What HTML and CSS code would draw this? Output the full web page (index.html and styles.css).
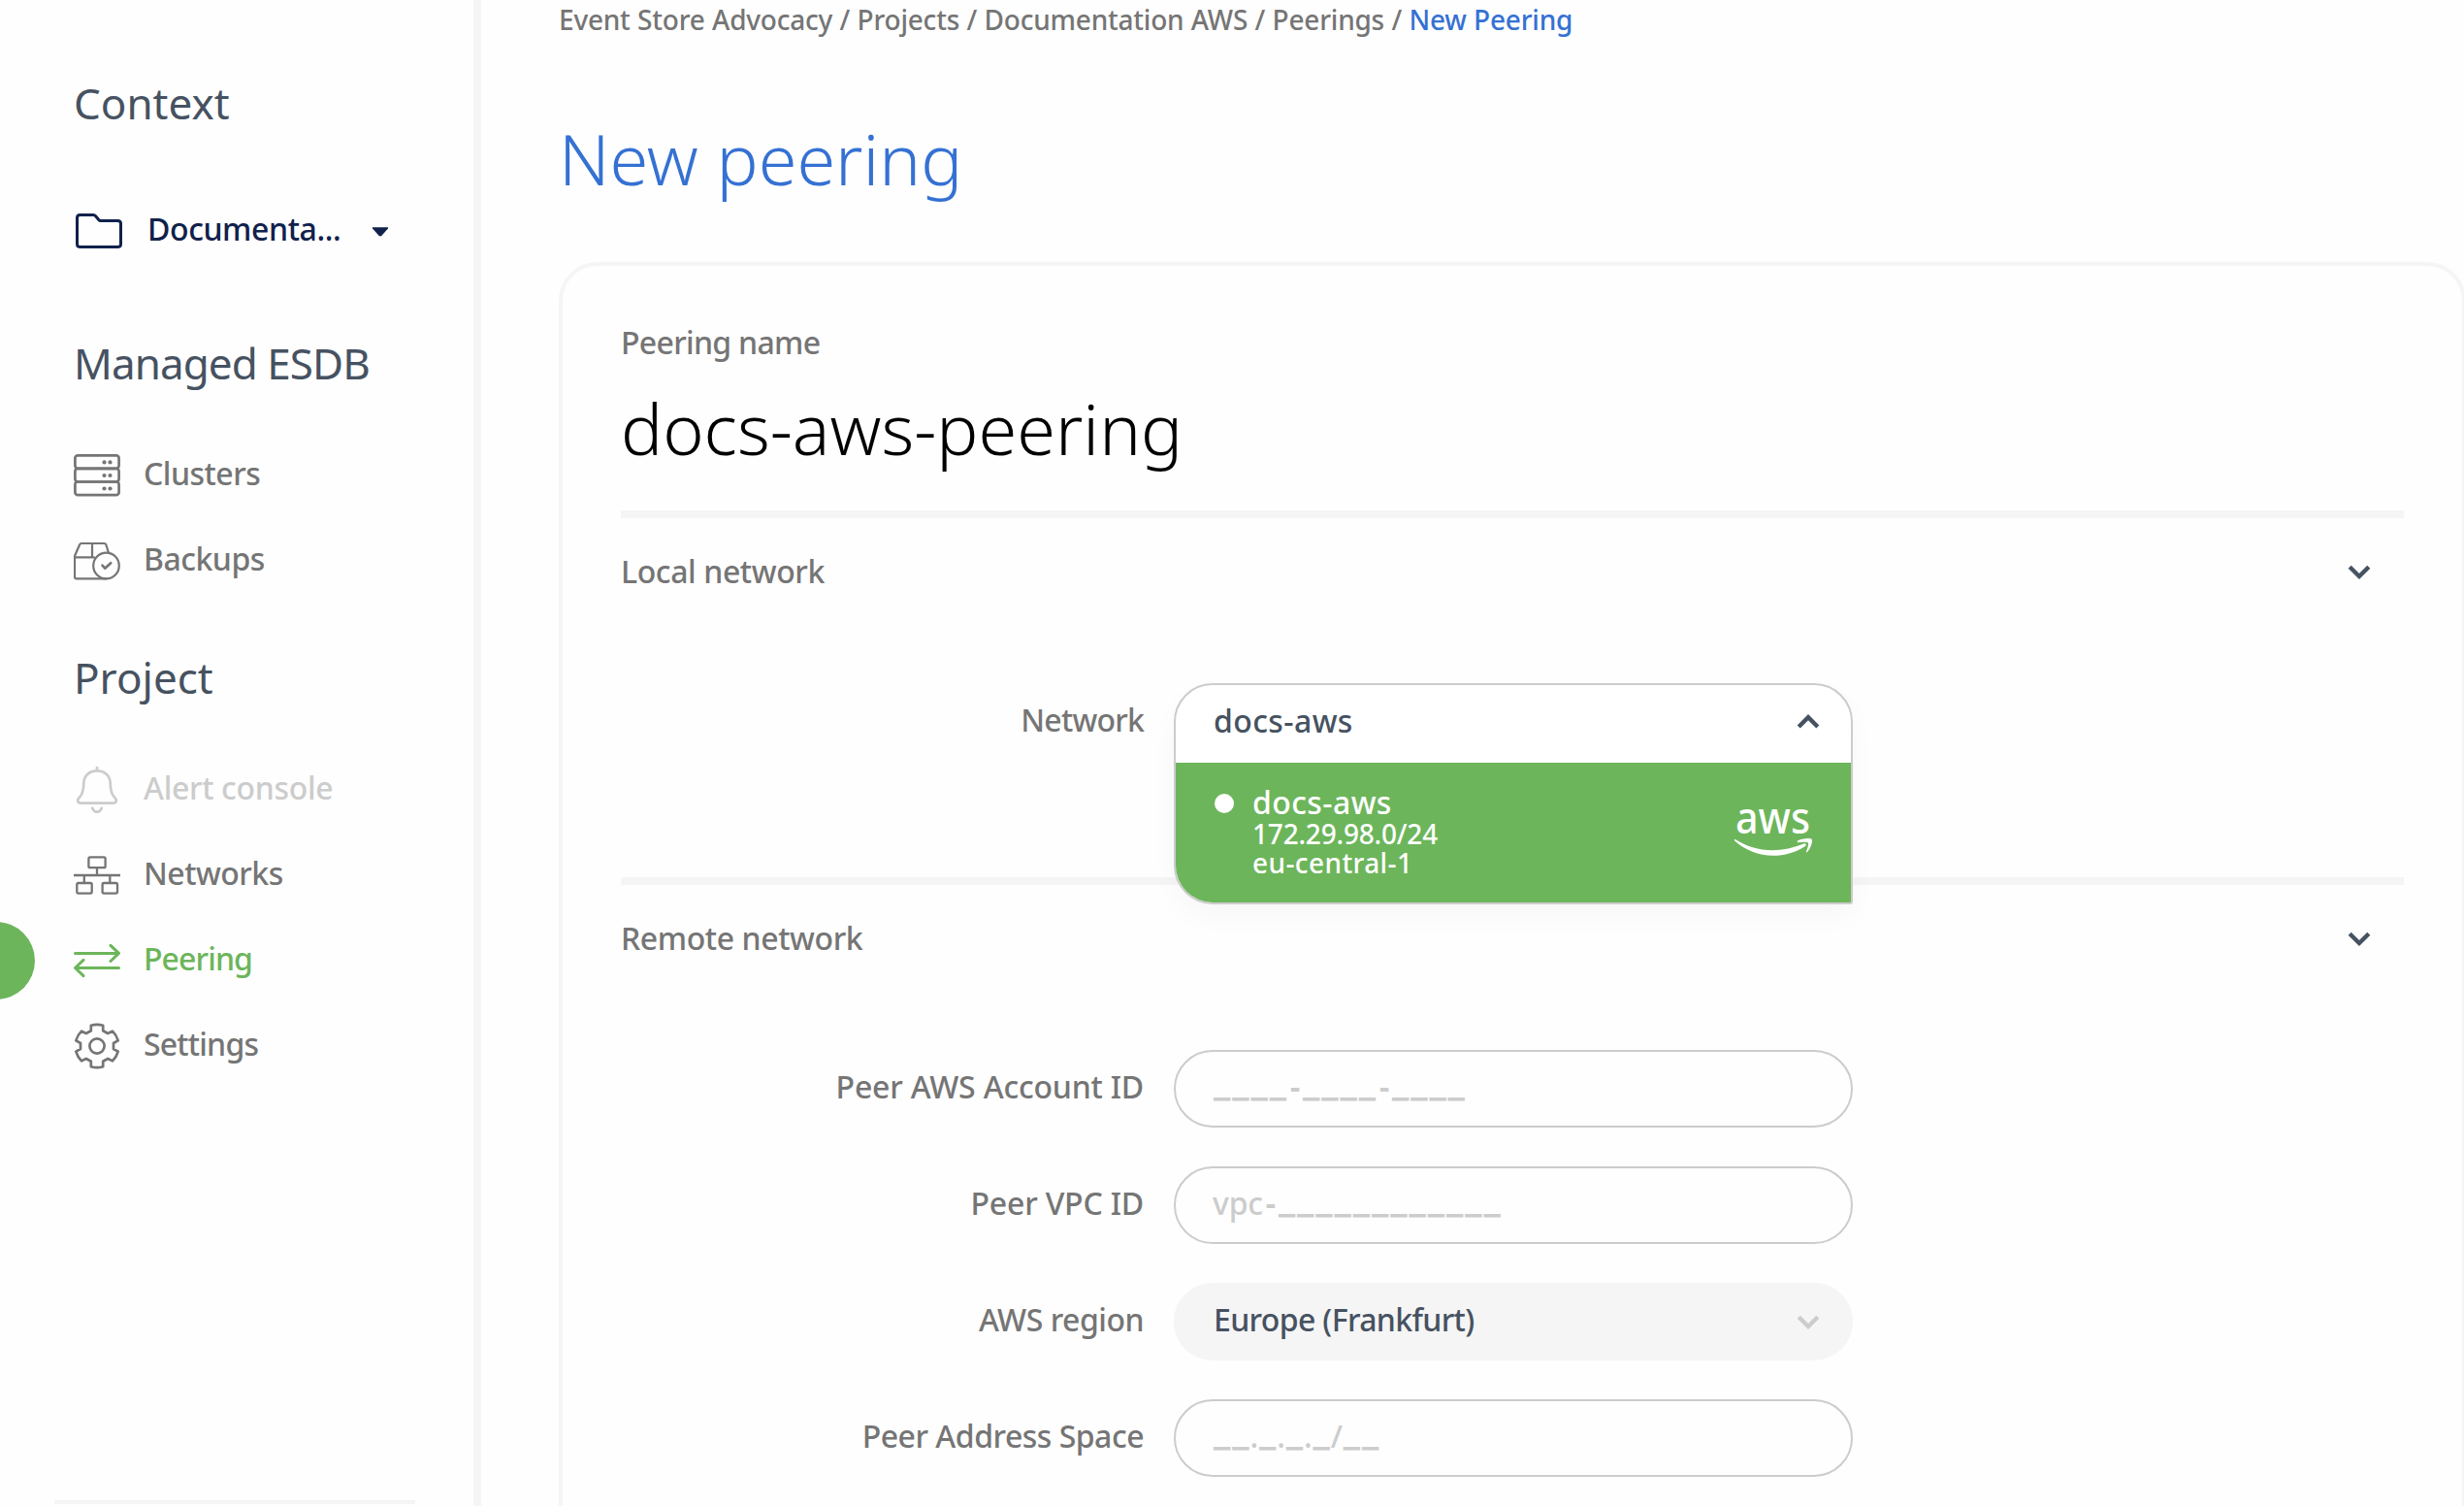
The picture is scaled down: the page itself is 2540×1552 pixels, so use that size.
FILE: index.html
```html
<!DOCTYPE html>
<html lang="en">
<head>
<meta charset="utf-8">
<title>New peering</title>
<link rel="stylesheet" href="styles.css">
</head>
<body>
<div class="app">
  <aside class="sidebar">
    <h2 class="side-title">Context</h2>
    <div class="context-picker">
      <svg class="folder" viewBox="0 0 48 36"><path d="M4.3 1.5H18.3c.9 0 1.5.3 2.1 1l3.6 4.2c.5.6 1 .8 1.700.8H43.500c2 0 3 1.100 3 3V31.500c0 2-1 3-3 3H4.500c-2 0-3-1-3-3V4.500c0-2 1-3 2.800-3z"/></svg>
      <span class="context-name">Documenta...</span>
      <svg class="caret" viewBox="0 0 16 10"><path d="M0 .3H16V1.500L9.500 8.800Q8 10.200 6.500 8.800L0 1.500z"/></svg>
    </div>
    <h2 class="side-title managed">Managed ESDB</h2>
    <nav class="side-nav">
      <a class="nav-item">
        <svg class="icon" viewBox="0 0 48 48"><g stroke-width="2.700"><rect x="1.400" y="3.300" width="45.200" height="13.500" rx="2.800"/><rect x="1.400" y="16.800" width="45.200" height="13.700" rx="2.800"/><rect x="1.400" y="30.500" width="45.200" height="13.700" rx="2.800"/></g><g fill="currentColor" stroke="none"><circle cx="31.500" cy="10.400" r="2.100"/><circle cx="37.500" cy="10.400" r="2.100"/><circle cx="31.500" cy="24" r="2.100"/><circle cx="37.500" cy="24" r="2.100"/><circle cx="31.500" cy="37.500" r="2.100"/><circle cx="37.500" cy="37.500" r="2.100"/></g></svg>
        <span>Clusters</span>
      </a>
      <a class="nav-item">
        <svg class="icon" viewBox="0 0 48 48"><g stroke-width="2.200"><path d="M35.800 15.300L33.400 7.500Q32.900 6 31.400 6H8Q6.500 6 6 7.500L1.200 18.500Q1 19 1 20V40.500Q1 42.300 2.800 42.300H33.500M1 20.300H21M19 6V20.300"/><circle cx="33.500" cy="29" r="13.300"/></g><path d="M29.500 28.600L32.200 31.700 38.200 26.200" stroke-width="2.600"/></svg>
        <span>Backups</span>
      </a>
    </nav>
    <h2 class="side-title project">Project</h2>
    <nav class="side-nav">
      <a class="nav-item disabled">
        <svg class="icon" viewBox="0 0 48 48"><path stroke-width="2.700" d="M24 1V4.300M24 4.300C15.500 4.300 10.500 10 10.300 17 10.200 24 9.500 28.500 5.500 32.300 3 34.700 4.200 37.600 7 37.600H41C43.800 37.600 45 34.700 42.500 32.300 38.500 28.500 37.800 24 37.700 17 37.500 10 32.500 4.300 24 4.300zM19.300 42.800Q20.500 46.600 24 46.600 27.500 46.600 28.700 42.800"/></svg>
        <span>Alert console</span>
      </a>
      <a class="nav-item">
        <svg class="icon" viewBox="0 0 48 48"><g stroke-width="2.300"><rect x="15.400" y="5.400" width="17.200" height="10.800" rx="1.500"/><rect x="3.300" y="32" width="15.400" height="10.600" rx="1.500"/><rect x="29.600" y="32" width="15.400" height="10.600" rx="1.500"/><path stroke-linecap="butt" d="M0 24H48M24 16V24M10.800 24V32M37.300 24V32"/></g></svg>
        <span>Networks</span>
      </a>
      <a class="nav-item active">
        <svg class="icon" viewBox="0 0 48 48"><path stroke-width="3" d="M1.500 16.400H46.300M38 8.300L46.500 16.400 38 24.500M46.500 31.500H1.700M10 23.400L1.500 31.500 10 39.600"/></svg>
        <span>Peering</span>
      </a>
      <a class="nav-item tight">
        <svg class="icon" viewBox="0 0 48 48"><path stroke-width="2.700" d="M17.800 2.800Q24 .800 30.200 2.800V8.200L35.200 11 40 8.600Q44 12.500 45.700 18.300L41 21V27L45.700 29.700Q44 35.500 40 39.400L35.200 37 30.200 39.800V45.200Q24 47.200 17.800 45.200V39.800L12.800 37 8 39.400Q4 35.500 2.300 29.700L7 27V21L2.300 18.300Q4 12.500 8 8.600L12.800 11 17.800 8.200z"/><circle cx="24" cy="24" r="7.600" stroke-width="2.700"/></svg>
        <span>Settings</span>
      </a>
    </nav>
    <div class="side-rule"></div>
  </aside>

  <main class="main">
    <div class="breadcrumb">Event Store Advocacy / Projects / Documentation AWS / Peerings / <span class="current">New Peering</span></div>
    <h1 class="title">New peering</h1>
    <div class="card">
      <div class="name-block">
        <div class="name-label">Peering name</div>
        <div class="name-value">docs-aws-peering</div>
      </div>
      <section class="section">
        <div class="section-head"><span>Local network</span><svg class="chevron" viewBox="0 0 24 16"><path d="M2.200 2.200L12 12 21.800 2.200"/></svg></div>
        <div class="field">
          <label class="tight">Network</label>
          <div class="select">
            <div class="dropdown">
              <div class="dropdown-head"><span class="loose">docs-aws</span><svg class="chevron" viewBox="0 0 24 16"><path d="M2.200 13L12 3.200 21.800 13"/></svg></div>
              <div class="option">
                <span class="dot"></span>
                <div class="option-text"><span class="option-name loose">docs-aws</span><span class="cidr">172.29.98.0/24</span><span class="loose">eu-central-1</span></div>
                <svg class="aws" viewBox="0 -26 84 78"><text x="3" y="26.500" textLength="77" lengthAdjust="spacingAndGlyphs">aws</text><path d="M2.800 33C14 40 27 44.300 41 44.300 52 44.300 63 41.800 73.500 37.500 75.500 36.800 76.800 38.800 75 40 65.500 46.500 53 49.800 42 49.800 27 49.800 13 44.200 2.200 34.600 1.400 33.800 2 32.600 2.800 33z"/><path d="M67 34.500C70 32.300 80 31 81.500 32.600 83 34.200 81 42.500 76.800 46.200 76.200 46.800 75.600 46.400 75.900 45.700 76.900 43.300 78.900 38 77.900 36.600 76.900 35.300 71 36 68 36.200 67 36.300 66 35.200 67 34.500z"/></svg>
              </div>
            </div>
          </div>
        </div>
      </section>
      <section class="section remote">
        <div class="section-head"><span>Remote network</span><svg class="chevron" viewBox="0 0 24 16"><path d="M2.200 2.200L12 12 21.800 2.200"/></svg></div>
        <div class="field">
          <label class="wide">Peer AWS Account ID</label>
          <div class="input"><span class="hint"><i>____</i><b>-</b><i>____</i><b>-</b><i>____</i></span></div>
        </div>
        <div class="field">
          <label class="wide">Peer VPC ID</label>
          <div class="input"><span class="hint">vpc<b>-</b><i>____________</i></span></div>
        </div>
        <div class="field">
          <label>AWS region</label>
          <div class="input locked"><span>Europe (Frankfurt)</span><svg class="chevron" viewBox="0 0 24 16"><path d="M2.200 2.200L12 12 21.800 2.200"/></svg></div>
        </div>
        <div class="field">
          <label>Peer Address Space</label>
          <div class="input"><span class="hint"><i>__</i>.<i>_</i>.<i>_</i>.<i>_</i>/<i>__</i></span></div>
        </div>
      </section>
    </div>
  </main>
</div>
</body>
</html>
```
FILE: styles.css
```css
* { box-sizing: border-box; }
body {
  margin: 0;
  background: #fefefe;
  color: #757575;
  font: 500 32px/48px "Noto Sans", sans-serif;
  letter-spacing: -.5px;
}
.app { display: flex; width: 2540px; height: 1552px; overflow: hidden; }

.sidebar {
  display: flex;
  flex-direction: column;
  flex: none;
  width: 496px;
  padding-top: 80px;
  border-right: 8px solid #f5f5f5;
}
.side-title {
  margin: 0 0 0 76px;
  font-size: 44px;
  font-weight: 400;
  line-height: 52px;
  letter-spacing: 0;
  color: #465261;
}
.managed { margin-top: 66px; letter-spacing: -.95px; }
.project { margin-top: 50px; }
.context-picker {
  display: flex;
  align-items: center;
  height: 88px;
  margin-top: 62px;
  padding-left: 78px;
  color: #10214b;
}
.folder { width: 48px; height: 36px; margin-right: 26px; fill: none; stroke: currentColor; stroke-width: 3; }
.context-name { width: 232px; padding-bottom: 4px; letter-spacing: -.4px; }
.caret { width: 16px; height: 10px; margin-top: 2px; fill: currentColor; }
.side-nav { margin-top: 46px; }
.nav-item { position: relative; display: flex; align-items: center; gap: 24px; height: 88px; padding-left: 76px; }
.nav-item span { padding-bottom: 4px; }
.icon { width: 48px; height: 48px; fill: none; stroke: currentColor; stroke-linecap: round; stroke-linejoin: round; }
.disabled { color: #ccc; letter-spacing: -.33px; }
.active { color: #6cb55b; letter-spacing: -.9px; }
.tight { letter-spacing: -.8px; }
.active::before {
  content: "";
  position: absolute;
  left: -44px;
  top: 4px;
  width: 80px;
  height: 80px;
  border-radius: 50%;
  background: #6cb55b;
}
.side-rule { width: 372px; height: 4px; margin: auto 0 2px 56px; background: #f5f5f5; }

.main { flex: none; width: 2046px; padding: 1px 0 0 80px; }
.breadcrumb { font-size: 28px; line-height: 38px; letter-spacing: -.22px; word-spacing: .4px; white-space: nowrap; }
.current { color: #3571d3; }
.title { margin: 80px 0 0; font-size: 72px; line-height: 88px; font-weight: 300; letter-spacing: 0; color: #3571d3; }
.card {
  width: 1966px;
  height: 1400px;
  margin-top: 63px;
  padding: 59px 60px 0;
  border: 4px solid #f5f5f5;
  border-radius: 40px;
}
.name-block { height: 193px; }
.name-label { line-height: 40px; letter-spacing: -.7px; }
.name-value { margin-top: 24px; font-size: 72px; line-height: 88px; font-weight: 300; letter-spacing: 0; color: #000; }
.section { height: 378px; border-top: 8px solid #f5f5f5; }
.remote { height: auto; }
.section-head {
  display: flex;
  align-items: center;
  justify-content: space-between;
  height: 110px;
  margin: 0 34px 60px 0;
  letter-spacing: -.4px;
}
.wide { letter-spacing: -.2px; }
.loose { letter-spacing: .4px; }
.chevron { flex: none; width: 24px; height: 16px; margin-top: 2px; fill: none; stroke: #465261; stroke-width: 4.4; }
.field { display: grid; grid-template-columns: 539px 700px; column-gap: 31px; height: 80px; margin-bottom: 40px; }
.field label { align-self: center; padding-bottom: 4px; text-align: right; }
.select { position: relative; }
.input {
  display: flex;
  align-items: center;
  justify-content: space-between;
  padding: 0 32px 4px 39px;
  border: 2px solid #ccc;
  border-radius: 40px;
}
.locked { border-color: #f5f5f5; background: #f5f5f5; color: #465261; letter-spacing: -.65px; }
.locked .chevron { stroke: #ccc; margin-top: 5px; }
.hint { color: #ccc; letter-spacing: -.2px; margin-left: -1px; }
.hint b { font-weight: 700; margin: 0 2px 0 3px; }
.hint i {
  font: 400 42px/0 Lato, sans-serif;
  letter-spacing: -.05px;
  vertical-align: 4px;
  -webkit-text-stroke: .8px #ccc;
}

.dropdown {
  position: absolute;
  top: 0;
  left: 0;
  width: 700px;
  height: 228px;
  overflow: hidden;
  border: 2px solid #ccc;
  border-radius: 40px 40px 3px 40px;
  background: #fff;
  box-shadow: 0 12px 28px rgba(0, 0, 0, .03);
}
.dropdown-head {
  display: flex;
  align-items: center;
  justify-content: space-between;
  height: 80px;
  padding: 0 32px 7px 39px;
  color: #465261;
}
.dropdown-head .chevron { margin-top: 3px; }
.option { display: flex; height: 144px; padding: 21px 38px 0 40px; background: #6cb55b; color: #fff; }
.dot { flex: none; width: 20px; height: 20px; margin: 11px 19px 0 0; border-radius: 50%; background: #fff; }
.option-text { display: flex; flex-direction: column; flex: 1; font-size: 28px; line-height: 30px; }
.option-name { font-size: 32px; line-height: 40px; margin-bottom: -3px; }
.cidr { letter-spacing: -.2px; }
.aws { width: 84px; height: 78px; margin-top: -1px; overflow: visible; fill: #fff; letter-spacing: 0; }
.aws text { font: 500 45px "Noto Sans", sans-serif; }
```
